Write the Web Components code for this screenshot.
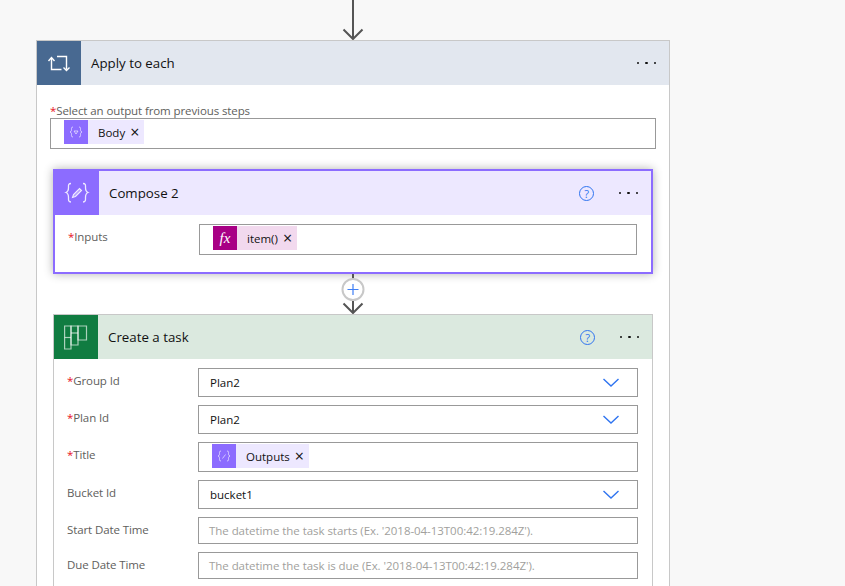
<!DOCTYPE html>
<html>
<head>
<meta charset="utf-8">
<title>Apply to each</title>
<style>
  html, body { margin: 0; height: 586px; overflow: hidden; background: #f8f8f8; }
  body { font-family: "Open Sans", "Liberation Sans", sans-serif; }
  flow-card.outer { margin-left: 36px; width: 634px; }
</style>
</head>
<body>
<flow-page>
  <flow-arrow></flow-arrow>
  <flow-card class="outer" tone="loop" icon="repeat" heading="Apply to each" nested>
    <flow-label required slot="top">Select an output from previous steps</flow-label>
    <flow-input slot="top" height="31" tokens><flow-token tone="compose" glyph="var">Body</flow-token></flow-input>

    <flow-card tone="compose" icon="compose" heading="Compose 2" help>
      <flow-field label="Inputs" required>
        <flow-input height="31" tokens><flow-token tone="expr">item()</flow-token></flow-input>
      </flow-field>
    </flow-card>

    <flow-arrow plus></flow-arrow>

    <flow-card tone="planner" icon="planner" heading="Create a task" help>
      <flow-field label="Group Id" required><flow-input height="29" dropdown>Plan2</flow-input></flow-field>
      <flow-field label="Plan Id" required><flow-input height="29" dropdown>Plan2</flow-input></flow-field>
      <flow-field label="Title" required>
        <flow-input height="30" tokens><flow-token tone="compose" glyph="edit">Outputs</flow-token></flow-input>
      </flow-field>
      <flow-field label="Bucket Id"><flow-input height="29" dropdown>bucket1</flow-input></flow-field>
      <flow-field label="Start Date Time"><flow-input height="27" placeholder="The datetime the task starts (Ex. '2018-04-13T00:42:19.284Z')."></flow-input></flow-field>
      <flow-field label="Due Date Time"><flow-input height="27" placeholder="The datetime the task is due (Ex. '2018-04-13T00:42:19.284Z')."></flow-input></flow-field>
    </flow-card>
  </flow-card>
</flow-page>

<script>
const ICONS = {
  repeat: `<g fill="none" stroke="#fff" stroke-width="1.4">
      <path d="M20 15.5h9.5v13"/><path d="M14.5 17v11.5h10"/>
      <path d="M11.5 20l3-3.5 3 3.5"/><path d="M26.5 26.5l3 3 3-3"/></g>`,
  compose: `<g fill="none" stroke="#fff" stroke-opacity=".85" stroke-width="1.3">
      <path d="M16 12.5c-3 0-2.5 2-2.5 4s0 4-2.5 5c2.500 1 2.500 3 2.500 5s-.5 4.500 2.500 4.500"/>
      <path d="M28 12.500c3 0 2.500 2 2.500 4s0 4 2.500 5c-2.500 1-2.500 3-2.500 5s.5 4.500-2.500 4.500"/>
      <path d="M17.500 26.500l1-3 6-6 2 2-6 6z" fill="#fff" fill-opacity=".35" stroke-width="1.100"/></g>`,
  planner: `<g fill="none" stroke="#fff" stroke-opacity=".65" stroke-width="1.2">
      <path d="M10.600 11h6.400v23h-6.400z"/><path d="M10.600 22.500h6.400"/>
      <path d="M17 11h7v19h-7z"/><path d="M17 18h7"/>
      <path d="M24 11h8.500v14h-8.500z"/></g>`
};

const TONES = `
  :host([tone=loop]) { --head: #e2e7ef; --tile: #486991; --edge: #c8c8c8; --edge-w: 1px; }
  :host([tone=compose]) { --head: #ede8ff; --tile: #8c6cff; --edge: #8c6cff; --edge-w: 2px;
    box-shadow: 0 0 9px rgba(0,0,0,.3); }
  :host([tone=planner]) { --head: #dbe9df; --tile: #107c41; --edge: #c8c8c8; --edge-w: 1px; }
`;

class FlowPage extends HTMLElement {
  constructor() {
    super();
    this.attachShadow({ mode: "open" });
    this.shadowRoot.innerHTML = `
      <style>
        :host { display: flex; flex-direction: column; align-items: flex-start; }
      </style>
      <slot></slot>
    `;
  }
}

class FlowArrow extends HTMLElement {
  constructor() {
    super();
    this.attachShadow({ mode: "open" });
  }

  connectedCallback() {
    const plus = this.hasAttribute("plus");
    this.shadowRoot.innerHTML = `
      <style>
        :host { display: flex; justify-content: center; height: 40px; }
        :host(:not([plus])) { width: 634px; margin-left: 36px; }
        svg { display: block; }
      </style>
      <svg width="26" height="40" viewBox="0 0 26 40" fill="none">
        ${plus ? `
          <path d="M13 0v6M13 27v12" stroke="#555" stroke-width="2"/>
          <path d="M3.500 29.500l9.500 9.500 9.500-9.500" stroke="#555" stroke-width="2"/>
          <circle cx="13" cy="15.500" r="10.500" fill="#fff" stroke="#c8c8c8" stroke-width="2"/>
          <path d="M7.500 15.500h11M13 10v11" stroke="#3f7ff5" stroke-width="1.200"/>
        ` : `
          <path d="M13 0v38" stroke="#555" stroke-width="2"/>
          <path d="M3.500 29.500l9.500 9.500 9.500-9.500" stroke="#555" stroke-width="2"/>
        `}
      </svg>
    `;
  }
}

class FlowCard extends HTMLElement {
  constructor() {
    super();
    this.attachShadow({ mode: "open" });
  }

  connectedCallback() {
    const help = this.hasAttribute("help");
    this.shadowRoot.innerHTML = `
      <style>
        ${TONES}
        :host { display: block; box-sizing: border-box; background: #fff;
          border: var(--edge-w) solid var(--edge); color: #111; }
        header { display: flex; align-items: center; height: 44px; background: var(--head); }
        .tile { width: 44px; height: 44px; background: var(--tile); flex-shrink: 0; }
        .tile svg { display: block; }
        h2 { flex: 1; margin: 0 0 0 10px; font-size: 13.300px; font-weight: 400; }
        .help { width: 13px; height: 13px; border: 1.500px solid #2f74f0; border-radius: 50%;
          color: #2f74f0; font-size: 11px; line-height: 13px; text-align: center; margin-right: 24.500px; }
        .more { display: flex; gap: 6px; margin-right: 13px; }
        .more i { width: 2.500px; height: 2.500px; background: #111; border-radius: 50%; }
        .top { padding: 18px 13px 20px; }
        .top ::slotted(flow-label) { line-height: 15px; }
        .nested { padding: 0 16px; }
        .plain { padding: 9px 14px 17px 13px; display: flex; flex-direction: column; gap: 8px; }
        :host([tone=planner]) .plain { padding-bottom: 40px; }
      </style>
      <header>
        <div class="tile"><svg width="44" height="44" viewBox="0 0 44 44">${ICONS[this.getAttribute("icon")]}</svg></div>
        <h2>${this.getAttribute("heading")}</h2>
        ${help ? `<span class="help">?</span>` : ""}
        <div class="more"><i></i><i></i><i></i></div>
      </header>
      ${this.hasAttribute("nested")
        ? `<div class="top"><slot name="top"></slot></div><div class="nested"><slot></slot></div>`
        : `<div class="plain"><slot></slot></div>`}
    `;
  }
}

class FlowLabel extends HTMLElement {
  constructor() {
    super();
    this.attachShadow({ mode: "open" });
    this.shadowRoot.innerHTML = `
      <style>
        :host { display: block; font-size: 11.500px; letter-spacing: -.1px; line-height: 18px;
          color: #605e5c; white-space: nowrap; }
        b { display: none; color: #e81123; font-weight: 400; }
        :host([required]) b { display: inline; }
      </style>
      <b>*</b><slot></slot>
    `;
  }
}

class FlowField extends HTMLElement {
  constructor() {
    super();
    this.attachShadow({ mode: "open" });
  }

  connectedCallback() {
    const required = this.hasAttribute("required") ? "required" : "";
    this.shadowRoot.innerHTML = `
      <style>
        :host { display: grid; grid-template-columns: 131px 1fr; }
        flow-label { padding-top: 4px; }
      </style>
      <flow-label ${required}>${this.getAttribute("label")}</flow-label>
      <slot></slot>
    `;
  }
}

class FlowInput extends HTMLElement {
  constructor() {
    super();
    this.attachShadow({ mode: "open" });
  }

  connectedCallback() {
    const placeholder = this.getAttribute("placeholder");
    this.shadowRoot.innerHTML = `
      <style>
        :host { display: flex; align-items: center; box-sizing: border-box;
          height: ${this.getAttribute("height")}px; border: 1px solid #999; background: #fff;
          padding-left: 11px; font-size: 11.500px; color: #111; white-space: nowrap; }
        :host([tokens]) { align-items: flex-start; padding: 1px 0 0 13px; }
        .ph { color: #a19f9d; margin-left: -1px; letter-spacing: -.05px; }
        .grow { flex: 1; }
        svg { display: block; margin-right: 18px; }
      </style>
      ${placeholder ? `<span class="ph">${placeholder}</span>` : ""}
      <slot></slot>
      <span class="grow"></span>
      ${this.hasAttribute("dropdown") ? `
        <svg width="16" height="9" viewBox="0 0 16 9" fill="none">
          <path d="M.5 1l7.500 7 7.500-7" stroke="#2f74f0" stroke-width="1.400"/>
        </svg>` : ""}
    `;
  }
}

class FlowToken extends HTMLElement {
  constructor() {
    super();
    this.attachShadow({ mode: "open" });
  }

  connectedCallback() {
    const glyph = this.getAttribute("glyph");
    const inner = glyph === "var"
      ? `<path d="M10 11l2 3 2-3z"/>`
      : `<path d="M10.500 14.500l3-4"/>`;
    this.shadowRoot.innerHTML = `
      <style>
        :host { display: flex; align-items: center; height: 24px; font-size: 11.500px; color: #111; }
        :host([tone=compose]) { --bg: #ede8ff; --tile: #8c6cff; }
        :host([tone=expr]) { --bg: #f2d9ee; --tile: #a80085; }
        :host { background: var(--bg); }
        .tile { display: flex; align-items: center; justify-content: center; width: 24px; height: 24px;
          background: var(--tile); color: #fff; font: italic 15px "Liberation Serif", serif; }
        .tile svg { display: block; }
        .text { padding: 0 5px 0 10px; }
        .close { font-size: 16px; line-height: 24px; padding-right: 5px; }
      </style>
      <span class="tile">${glyph ? `
        <svg width="24" height="24" viewBox="0 0 24 24" fill="none" stroke="#fff" stroke-opacity=".6" stroke-width="1">
          <path d="M9 7c-2 0-1.500 1.500-1.500 2.500s0 2-1.500 2.500c1.500 .5 1.500 1.500 1.500 2.500s-.5 2.500 1.500 2.500"/>
          <path d="M15 7c2 0 1.500 1.500 1.500 2.500s0 2 1.500 2.500c-1.500 .5-1.500 1.500-1.500 2.500s.5 2.500-1.500 2.500"/>
          ${inner}
        </svg>` : "fx"}</span>
      <span class="text"><slot></slot></span>
      <span class="close">×</span>
    `;
  }
}

customElements.define("flow-page", FlowPage);
customElements.define("flow-arrow", FlowArrow);
customElements.define("flow-label", FlowLabel);
customElements.define("flow-token", FlowToken);
customElements.define("flow-input", FlowInput);
customElements.define("flow-field", FlowField);
customElements.define("flow-card", FlowCard);
</script>
</body>
</html>
